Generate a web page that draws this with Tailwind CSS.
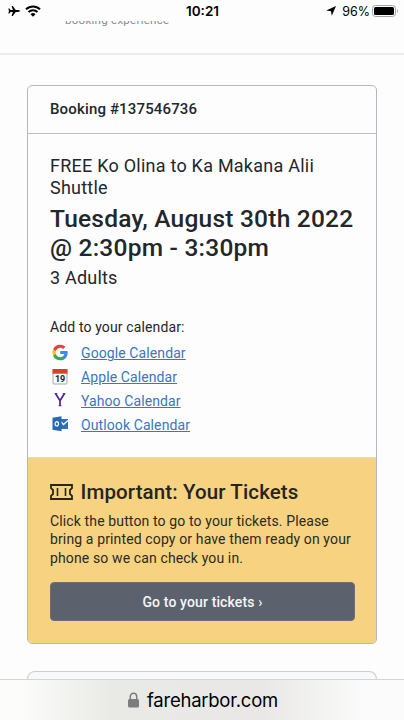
<!DOCTYPE html>
<html lang="en">
  <head>
    <meta charset="UTF-8" />
    <meta name="viewport" content="width=device-width, initial-scale=1.0" />
    <title>Booking #137546736</title>
    <script src="https://cdn.jsdelivr.net/npm/@tailwindcss/browser@4"></script>
  </head>
  <body class="bg-[#fdfdfd] text-[#23262b] font-['Roboto',sans-serif]">
    <div class="h-[720px] flex flex-col overflow-hidden">
      <!-- Status bar -->
      <div class="h-[21px] shrink-0 grid grid-cols-3 items-center px-2 text-black font-['Inter',sans-serif]">
        <div class="flex items-center gap-[5px] pt-px">
          <svg class="w-3 h-3" viewBox="0 0 12 12" fill="currentColor">
            <path d="M11.8 6c0 .6-.8.9-1.8.9H7.7L4.8 11H3.6l1.3-4.1H2.6L1.3 8.5H.3L1 6 .3 3.5h1l1.3 1.6h2.3L3.6 1h1.2l2.9 4.1H10c1 0 1.8.3 1.8.9z" />
          </svg>
          <svg class="w-4 h-3" viewBox="0 0 16 12">
            <path d="M1 4.3a10 10 0 0 1 14 0M3.5 7a6.4 6.4 0 0 1 9 0" fill="none" stroke="currentColor" stroke-width="2" />
            <path d="M8 11.7 5.5 9.2a3.6 3.6 0 0 1 5 0z" fill="currentColor" />
          </svg>
        </div>
        <div class="text-center text-[13.5px] leading-none font-semibold pt-[2px] pl-px">10:21</div>
        <div class="flex items-center justify-end pt-px whitespace-nowrap -mr-[3px]">
          <svg class="w-[10px] h-[10px] mr-[6px]" viewBox="0 0 10 10" fill="currentColor">
            <path d="M10 0 5.8 9.7 5 5.200 .2 4.500z" />
          </svg>
          <span class="text-[12.5px] leading-none pt-[2px]">96%</span>
          <svg class="w-[27px] h-3 ml-[2px]" viewBox="0 0 27 12">
            <rect x=".5" y=".5" width="23" height="11" rx="3" fill="none" stroke="#a3a3a3" />
            <rect x="2" y="2" width="20" height="8" rx="1.6" />
            <path d="M25 4v4c1.3-.5 1.3-3.5 0-4z" fill="#a3a3a3" />
          </svg>
        </div>
      </div>

      <!-- Page header, scrolled under the status bar -->
      <div class="h-[34px] shrink-0 overflow-hidden border-b-2 border-[#ececec]">
        <div class="-mt-[9px] pl-[65px] text-[11.5px] leading-4 tracking-[0.27px] text-[#858990]">booking experience</div>
      </div>

      <!-- Booking card -->
      <main class="mt-[30px] ml-[27px] w-[350px] h-[559px] shrink-0 flex flex-col rounded-[5px] border border-[#b3b8be] overflow-hidden whitespace-nowrap">
        <div class="h-[48px] shrink-0 flex items-center px-[22px] border-b border-[#bcc0c6] text-[15px] font-medium tracking-[0.15px]">Booking #137546736</div>

        <div class="h-[323px] shrink-0 px-[22px] pt-[21px]">
          <h2 class="text-[18px] leading-[22px] tracking-[0.24px]">FREE Ko Olina to Ka Makana Alii<br />Shuttle</h2>
          <h1 class="mt-[5px] text-[24.5px] leading-[29px] font-medium tracking-[0.23px]">Tuesday, August 30th 2022<br />@ 2:30pm - 3:30pm</h1>
          <p class="mt-[5px] text-[18px] leading-[22px] tracking-[0.2px]">3 Adults</p>

          <p class="mt-[29px] text-[14px] leading-[18px] tracking-[0.13px]">Add to your calendar:</p>
          <ul class="mt-[6px] text-[14px] text-[#3a76c4] tracking-[0.1px]">
            <li class="h-[23.8px] flex items-center gap-[12px]">
              <svg class="w-[19px] h-[19px] pb-[2px]" viewBox="-1 0 24 24">
                <path d="M22.56 12.25c0-.78-.07-1.53-.2-2.25H12v4.26h5.92c-.26 1.37-1.04 2.53-2.21 3.31v2.77h3.57c2.08-1.92 3.28-4.74 3.28-8.09z" fill="#4285f4" />
                <path d="M12 23c2.97 0 5.46-.98 7.28-2.66l-3.57-2.77c-.98.66-2.23 1.06-3.71 1.06-2.86 0-5.29-1.93-6.16-4.53H2.18v2.84A11 11 0 0 0 12 23z" fill="#34a853" />
                <path d="M5.84 14.1a6.6 6.6 0 0 1 0-4.2V7.06H2.18a11 11 0 0 0 0 9.88z" fill="#fbbc05" />
                <path d="M12 5.38c1.62 0 3.06.56 4.21 1.64l3.15-3.15A11 11 0 0 0 2.18 7.06L5.84 9.9C6.71 7.31 9.14 5.38 12 5.38z" fill="#ea4335" />
              </svg>
              <a class="underline" href="#">Google Calendar</a>
            </li>
            <li class="h-[23.8px] flex items-center gap-[12px]">
              <svg class="w-[19px] h-[18px] pb-[2px]" viewBox="0 0 18 16">
                <rect x="2.5" y="1" width="14" height="14" rx="1" fill="#fafafa" stroke="#aaa" />
                <path d="M2 0h15v4.7H2z" fill="#d1432f" />
                <text x="9.4" y="12.6" text-anchor="middle" font-size="9" font-weight="700" letter-spacing="-.2" fill="#222">19</text>
              </svg>
              <a class="underline" href="#">Apple Calendar</a>
            </li>
            <li class="h-[23.8px] flex items-center gap-[12px]">
              <svg class="w-[19px] h-[18px] pb-[2px]" viewBox="0 0 18 16">
                <path d="M5 1.5 9.5 8.7 14 1.5M9.5 8.5V14" fill="none" stroke="#4b1fa0" stroke-width="1.7" />
                <path d="M4 1.5h2.8M12.2 1.5H15M8 13.8h3" stroke="#4b1fa0" stroke-width=".8" />
              </svg>
              <a class="underline" href="#">Yahoo Calendar</a>
            </li>
            <li class="h-[23.8px] flex items-center gap-[12px]">
              <svg class="w-[19px] h-[18px] pb-[2px]" viewBox="0 0 18 16">
                <path d="M10 3h7.5v10H10z" fill="#2f6fb8" />
                <path d="m10.5 6 2.500 2.500L17.500 4.500" fill="none" stroke="#fff" stroke-width="1.3" />
                <path d="M2 1.8 11 .3v15L2 13.8z" fill="#2668b2" />
                <ellipse cx="6.3" cy="7.8" rx="1.7" ry="2.2" fill="none" stroke="#fff" stroke-width="1.2" />
              </svg>
              <a class="underline" href="#">Outlook Calendar</a>
            </li>
          </ul>
        </div>

        <!-- Tickets -->
        <section class="grow border-t border-[#dcdad6] bg-[#f6d281] px-[22px] pt-[22px] text-[#2c2a20]">
          <h3 class="flex items-center gap-[8px] text-[20.5px] leading-6 font-medium tracking-[0.12px] text-[#26251d]">
            <svg class="w-[23px] h-4 mb-px -ml-[0.5px]" viewBox="0 0 23 16" fill="none" stroke="currentColor" stroke-width="1.8">
              <path d="M1 1h21v3.2l-2 1.800v4l2 1.800V15H1v-3.200L3 10V6L1 4.200z" />
              <path d="M7.500 4v8M15.500 4v8" stroke-width="1.600" />
            </svg>
            Important: Your Tickets
          </h3>
          <p class="mt-[7.5px] text-[14px] leading-[18.5px] tracking-[0.13px]">Click the button to go to your tickets. Please<br />bring a printed copy or have them ready on your<br />phone so we can check you in.</p>
          <a class="mt-[15px] h-[39px] w-[305px] flex items-center justify-center rounded bg-[#5b626e] border border-[#6d7070] pt-px text-[14px] font-medium tracking-[0.13px] text-[#f4f5f6]" href="#">Go to your tickets ›</a>
        </section>
      </main>

      <!-- Next card, cut off by the browser bar -->
      <div class="mt-[27px] ml-[27px] w-[350px] h-[8px] shrink-0 rounded-t-[8px] border border-b-0 border-[#cbced0] bg-[#f8f9fa]"></div>

      <!-- Browser address bar -->
      <footer class="h-[41px] shrink-0 flex items-center justify-center gap-2 pl-[2px] border-t border-[#d4d5d5] bg-[linear-gradient(to_right,#fcfcfb_5%,#f1f1ee_18%,#e9e9e6_28%,#e9e8e6_65%,#f3f3f2_80%,#fbfbfb_90%)] text-black font-['Inter',sans-serif]">
        <svg class="w-[11px] h-4 text-[#7d7d7f]" viewBox="0 0 11 16">
          <rect y="7" width="11" height="8.5" rx="1.5" fill="currentColor" />
          <path d="M2.3 7.5v-3a3.2 3.2 0 0 1 6.4 0v3" fill="none" stroke="currentColor" stroke-width="1.5" />
        </svg>
        <span class="text-[18.5px] leading-none tracking-[-0.25px]">fareharbor.com</span>
      </footer>
    </div>
  </body>
</html>
